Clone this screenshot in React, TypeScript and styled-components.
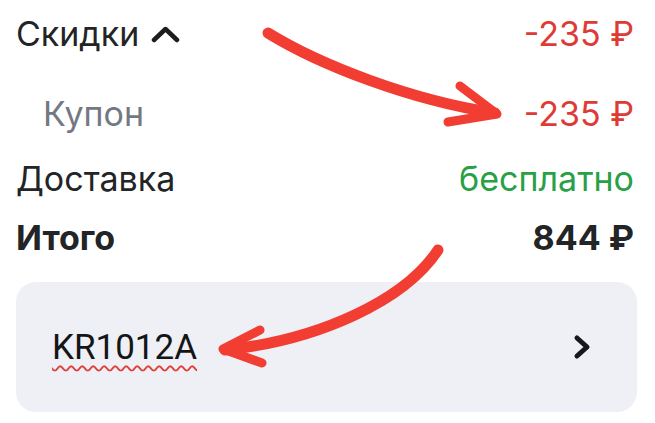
import styled, { createGlobalStyle } from 'styled-components';

const GlobalStyle = createGlobalStyle`
  html, body {
    margin: 0;
    padding: 0;
    background: #ffffff;
  }
  body {
    font-family: Inter, "Noto Sans", sans-serif;
    color: #222426;
  }
`;

const Page = styled.div`
  position: relative;
  width: 655px;
  height: 423px;
  box-sizing: border-box;
  padding: 0 18px 0 16px;
  overflow: hidden;
`;

const Row = styled.div<{ $top: number; $indent?: number }>`
  display: flex;
  justify-content: space-between;
  align-items: center;
  height: 40px;
  margin-top: ${(p) => p.$top}px;
  padding-left: ${(p) => p.$indent ?? 0}px;
  padding-right: 3px;
  font-size: 34px;
  line-height: 40px;
`;

const Label = styled.span<{ $muted?: boolean; $bold?: boolean }>`
  display: flex;
  align-items: center;
  color: ${(p) => (p.$muted ? '#737882' : '#222426')};
  font-weight: ${(p) => (p.$bold ? 700 : 400)};
`;

const Value = styled.span<{ $tone?: 'red' | 'green' | 'dark'; $bold?: boolean }>`
  color: ${(p) => (p.$tone === 'red' ? '#de3b37' : p.$tone === 'green' ? '#27a046' : '#222426')};
  font-weight: ${(p) => (p.$bold ? 700 : 400)};
`;

const Caret = styled.svg`
  margin-left: 12px;
  width: 29px;
  height: 17px;
`;

const PromoCard = styled.div`
  display: flex;
  align-items: center;
  justify-content: space-between;
  margin-top: 24px;
  height: 130px;
  box-sizing: border-box;
  padding: 0 46px 0 36px;
  background: #eef0f5;
  border-radius: 20px;
`;

const PromoCode = styled.span`
  font-family: Roboto, "Liberation Sans", sans-serif;
  font-size: 35px;
  color: #141517;
  text-decoration: underline wavy #e0403a;
  text-decoration-thickness: 2px;
  text-underline-offset: 6px;
`;

const Chevron = styled.svg`
  width: 18px;
  height: 26px;
`;

const Overlay = styled.svg`
  position: absolute;
  left: 0;
  top: 0;
  pointer-events: none;
`;

export default function App() {
  return (
    <>
      <GlobalStyle />
      <Page>
        <Row $top={14}>
          <Label>
            Скидки
            <Caret viewBox="0 0 29 17">
              <path d="M3 14 L14.5 3 L26 14" fill="none" stroke="#1c1d1f" strokeWidth="4.5" strokeLinecap="round" strokeLinejoin="round" />
            </Caret>
          </Label>
          <Value $tone="red">-235 ₽</Value>
        </Row>
        <Row $top={40} $indent={27}>
          <Label $muted>Купон</Label>
          <Value $tone="red">-235 ₽</Value>
        </Row>
        <Row $top={25}>
          <Label>Доставка</Label>
          <Value $tone="green">бесплатно</Value>
        </Row>
        <Row $top={19}>
          <Label $bold>Итого</Label>
          <Value $bold>844 ₽</Value>
        </Row>
        <PromoCard>
          <PromoCode>KR1012A</PromoCode>
          <Chevron viewBox="0 0 18 26">
            <path d="M4 4 L14 13 L4 22" fill="none" stroke="#17181a" strokeWidth="5" strokeLinecap="round" strokeLinejoin="round" />
          </Chevron>
        </PromoCard>
        <Overlay width="655" height="423" viewBox="0 0 655 423">
          <g fill="none" stroke="#f23d33" strokeLinecap="round" strokeLinejoin="round">
            <path d="M268 33 C320 65, 410 100, 495 113" strokeWidth="11" />
            <path d="M460 86 L497 114 L448 122" strokeWidth="9" />
            <path d="M438 250 C405 300, 320 340, 225 350" strokeWidth="11" />
            <path d="M260 330 L223 349 L262 363" strokeWidth="9" />
          </g>
        </Overlay>
      </Page>
    </>
  );
}
